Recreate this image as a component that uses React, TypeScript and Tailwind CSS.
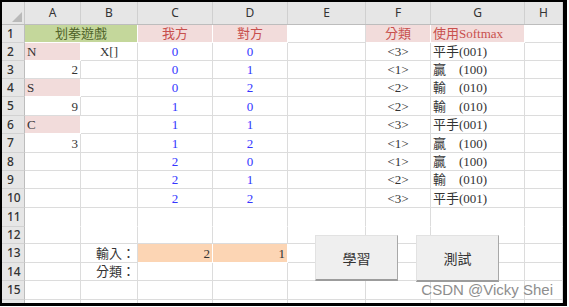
import React from "react";

type Cell = {
  t?: string;
  a?: "l" | "c" | "r";
  c?: string;
  bg?: string;
  span?: number;
};

const colW = ["w-[56px]", "w-[57px]", "w-[75px]", "w-[75px]", "w-[78px]", "w-[65px]", "w-[94px]", "w-[38px]"];
const letters = ["A", "B", "C", "D", "E", "F", "G", "H"];
const rowH = ["h-[18px]", "h-[18px]", "h-[18px]", "h-[18px]", "h-[19px]", "h-[18px]", "h-[19px]", "h-[18px]", "h-[18px]", "h-[19px]", "h-[19px]", "h-[17px]", "h-[19px]", "h-[18px]", "h-[19px]", "h-[18px]"];

const blue = "text-[#3535ff]";
const red = "text-[#c8504d]";
const pink = "bg-[#f2dcdb]";

const n = (v: string): Cell => ({ t: v, a: "c", c: blue });
const f = (v: string): Cell => ({ t: v, a: "c" });
const g = (v: string): Cell => ({ t: v, a: "l" });
const E: Cell = {};

const W = "贏\u3000(100)";
const L = "輸\u3000(010)";
const D = "平手(001)";

const rows: Cell[][] = [
  [{ t: "划拳遊戲", a: "c", c: "text-[#4f6228]", bg: "bg-[#c4d79b]", span: 2 }, { t: "我方", a: "c", c: red, bg: pink }, { t: "對方", a: "c", c: red, bg: pink }, E, { t: "分類", a: "c", c: red, bg: pink }, { t: "使用Softmax", a: "l", c: red, bg: pink }, E],
  [{ t: "N", a: "l", bg: pink }, f("X[]"), n("0"), n("0"), E, f("<3>"), g(D), E],
  [{ t: "2", a: "r" }, E, n("0"), n("1"), E, f("<1>"), g(W), E],
  [{ t: "S", a: "l", bg: pink }, E, n("0"), n("2"), E, f("<2>"), g(L), E],
  [{ t: "9", a: "r" }, E, n("1"), n("0"), E, f("<2>"), g(L), E],
  [{ t: "C", a: "l", bg: pink }, E, n("1"), n("1"), E, f("<3>"), g(D), E],
  [{ t: "3", a: "r" }, E, n("1"), n("2"), E, f("<1>"), g(W), E],
  [E, E, n("2"), n("0"), E, f("<1>"), g(W), E],
  [E, E, n("2"), n("1"), E, f("<2>"), g(L), E],
  [E, E, n("2"), n("2"), E, f("<3>"), g(D), E],
  [E, E, E, E, E, E, E, E],
  [E, E, E, E, E, E, E, E],
  [E, { t: "輸入：", a: "r" }, { t: "2", a: "r", bg: "bg-[#fcd5b4]" }, { t: "1", a: "r", bg: "bg-[#fcd5b4]" }, E, E, E, E],
  [E, { t: "分類：", a: "r" }, E, E, E, E, E, E],
  [E, E, E, E, E, E, E, E],
  [E, E, E, E, E, E, E, E],
];

const alignCls = { l: "justify-start pl-[2px]", c: "justify-center", r: "justify-end pr-[2px]" };

export default function App() {
  return (
    <div className="bg-white w-[569px] h-[307px]">
      <div className="relative w-[567px] h-[306px] border-l-2 border-t-2 border-r-4 border-b-[3px] border-black overflow-hidden font-['Liberation_Serif','Noto_Sans_CJK_TC',serif] text-[13px] leading-[16px] text-[#333]">
        {/* column headers */}
        <div className="flex h-[23px] bg-[#e6e6e6] border-b border-[#bdbdbd] font-['Noto_Sans','Liberation_Sans',sans-serif] text-[12px] text-[#333]">
          <div className="w-[23px] flex items-end justify-end pr-[2px] pb-[2px] border-r border-[#c8c8c8]">
            <svg width="10" height="10" viewBox="0 0 10 10">
              <polygon points="10,0 10,10 0,10" fill="#b9b9b9" />
            </svg>
          </div>
          {letters.map((l, i) => (
            <div key={l} className={`${colW[i]} flex items-center justify-center border-r border-[#d0d0d0]`}>
              {l}
            </div>
          ))}
        </div>

        {rows.map((row, r) => {
          let col = 0;
          return (
            <div key={r} className={`flex ${rowH[r]}`}>
              <div className="w-[23px] shrink-0 flex items-center pl-[5px] bg-[#e6e6e6] border-r border-b border-r-[#bdbdbd] border-b-[#d2d2d2] font-['Noto_Sans','Liberation_Sans',sans-serif] text-[12px] font-medium text-[#333]">
                {r < 15 ? r + 1 : ""}
              </div>
              {row.map((cell, k) => {
                const start = col;
                col += cell.span ?? 1;
                const w = cell.span === 2 ? "w-[113px]" : colW[start];
                const border = cell.bg
                  ? "border-white"
                  : r === 10
                  ? "border-r-[#dcdcdc] border-b-white"
                  : "border-[#dcdcdc]";
                return (
                  <div
                    key={k}
                    className={`${w} shrink-0 flex items-end whitespace-pre border-r border-b ${border} ${cell.bg ?? ""} ${cell.c ?? ""} ${alignCls[cell.a ?? "l"]}`}
                  >
                    {cell.t}
                  </div>
                );
              })}
            </div>
          );
        })}

        <button className="absolute left-[313px] top-[233px] w-[83px] h-[46px] bg-[#efefef] border-l border-t border-[#e2e2e2] border-r border-r-[#a8a8a8] border-b-2 border-b-[#9c9c9c] font-['Noto_Sans_CJK_TC',sans-serif] text-[14px] text-[#333]">
          學習
        </button>
        <button className="absolute left-[414px] top-[233px] w-[83px] h-[47px] bg-[#efefef] border-l border-t border-[#e2e2e2] border-r border-r-[#a8a8a8] border-b-2 border-b-[#9c9c9c] font-['Noto_Sans_CJK_TC',sans-serif] text-[14px] text-[#333]">
          測試
        </button>

        <div className="absolute right-[10px] top-[279px] font-['Liberation_Sans',sans-serif] text-[15px] leading-[18px] text-[#8e8e8e]">
          CSDN @Vicky Shei
        </div>
      </div>
    </div>
  );
}
